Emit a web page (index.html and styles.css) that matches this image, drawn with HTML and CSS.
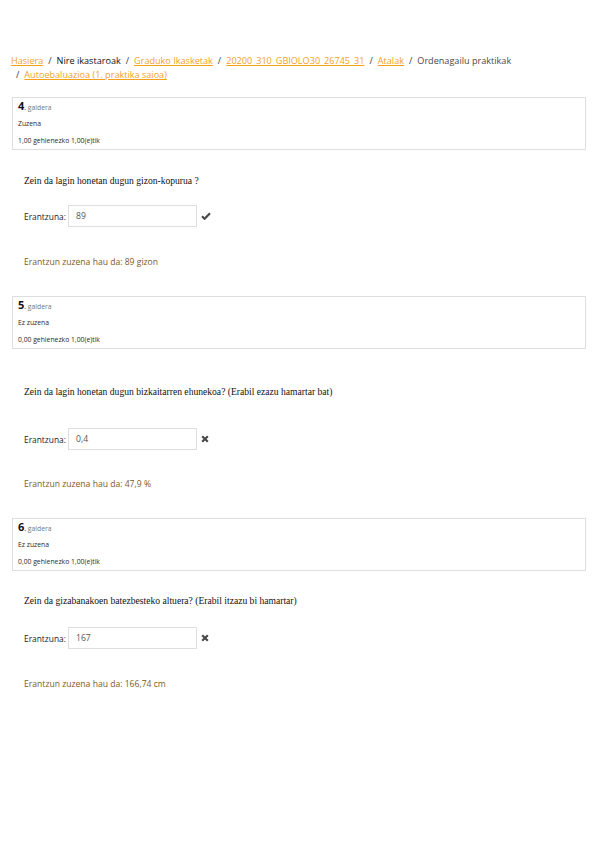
FILE: index.html
```html
<!DOCTYPE html>
<html>
<head>
<meta charset="utf-8">
<link rel="stylesheet" href="styles.css">
</head>
<body>
<nav class="crumbs">
  <ol class="crumb-list">
    <li class="crumb"><a href="#">Hasiera</a></li>
    <li class="crumb"><span class="current">Nire ikastaroak</span></li>
    <li class="crumb"><a href="#">Graduko Ikasketak</a></li>
    <li class="crumb"><a href="#">20200_310_GBIOLO30_26745_31</a></li>
    <li class="crumb"><a href="#">Atalak</a></li>
    <li class="crumb"><span class="plain">Ordenagailu praktikak</span></li>
    <li class="crumb"><a href="#">Autoebaluazioa (1. praktika saioa)</a></li>
  </ol>
</nav>

<section class="que q4">
  <div class="info">
    <div class="no"><span class="qno">4</span><span class="dot">.</span> galdera</div>
    <div class="state">Zuzena</div>
    <div class="grade">1,00 gehienezko 1,00(e)tik</div>
  </div>
  <p class="qtext">Zein da lagin honetan dugun gizon-kopurua ?</p>
  <div class="answer">
    <label class="alabel">Erantzuna:</label>
    <div class="ainput">89</div>
    <svg class="mark" width="10" height="8" viewBox="0 0 10 8"><path d="M1 4.2 L3.6 6.8 L9 1.2" fill="none" stroke="#4a4a4a" stroke-width="2.2"/></svg>
  </div>
  <p class="feedback">Erantzun zuzena hau da: 89 gizon</p>
</section>

<section class="que q5">
  <div class="info">
    <div class="no"><span class="qno">5</span><span class="dot">.</span> galdera</div>
    <div class="state">Ez zuzena</div>
    <div class="grade">0,00 gehienezko 1,00(e)tik</div>
  </div>
  <p class="qtext">Zein da lagin honetan dugun bizkaitarren ehunekoa? (Erabil ezazu hamartar bat)</p>
  <div class="answer">
    <label class="alabel">Erantzuna:</label>
    <div class="ainput">0,4</div>
    <svg class="mark" width="8" height="8" viewBox="0 0 8 8"><path d="M1.2 1.2 L6.8 6.8 M6.8 1.2 L1.2 6.8" fill="none" stroke="#4a4a4a" stroke-width="2.2"/></svg>
  </div>
  <p class="feedback">Erantzun zuzena hau da: 47,9 %</p>
</section>

<section class="que q6">
  <div class="info">
    <div class="no"><span class="qno">6</span><span class="dot">.</span> galdera</div>
    <div class="state">Ez zuzena</div>
    <div class="grade">0,00 gehienezko 1,00(e)tik</div>
  </div>
  <p class="qtext">Zein da gizabanakoen batezbesteko altuera? (Erabil itzazu bi hamartar)</p>
  <div class="answer">
    <label class="alabel">Erantzuna:</label>
    <div class="ainput">167</div>
    <svg class="mark" width="8" height="8" viewBox="0 0 8 8"><path d="M1.2 1.2 L6.8 6.8 M6.8 1.2 L1.2 6.8" fill="none" stroke="#4a4a4a" stroke-width="2.2"/></svg>
  </div>
  <p class="feedback">Erantzun zuzena hau da: 166,74 cm</p>
</section>
</body>
</html>
```

FILE: styles.css
```css
html, body {
  margin: 0;
  padding: 0;
  background: #ffffff;
}

body {
  padding: 54px 13px 0 11px;
  font-family: "Open Sans", "Liberation Sans", sans-serif;
  color: #1d2125;
}

.crumbs {
  font-size: 9.1px;
  line-height: 14px;
}

.crumb-list {
  list-style: none;
  margin: 0;
  padding: 0;
  display: flex;
  flex-wrap: wrap;
}

.crumb + .crumb {
  padding-left: 5px;
}

.crumb + .crumb::before {
  content: "/";
  padding-right: 5px;
  color: #373a3c;
}

.crumb a {
  color: #f4a11a;
  text-decoration: underline;
}

.current {
  color: #111;
}

.plain {
  color: #4a4a4a;
}

.que {
  margin: 15px 0 0 1px;
}

.info {
  border: 1px solid #dedede;
  padding: 2px 5px 0;
  color: #2a2a2a;
  font-size: 6.8px;
}

.no {
  height: 16px;
  line-height: 16px;
  color: #777;
}

.qno {
  font-size: 11px;
  font-weight: 700;
  color: #111;
  line-height: 10px;
}

.dot {
  color: #111;
}

.state {
  height: 16px;
  line-height: 16px;
}

.grade {
  height: 16px;
  line-height: 16px;
  margin-top: 1px;
}

.qtext {
  margin: 24px 0 0 12px;
  font-family: "Liberation Serif", "Times New Roman", serif;
  font-size: 9.6px;
  line-height: 14px;
  color: #111;
}

.answer {
  display: flex;
  align-items: center;
  margin: 17px 0 0 12px;
  height: 22px;
}

.alabel {
  font-size: 8.4px;
  color: #222;
  width: 44px;
}

.ainput {
  box-sizing: border-box;
  width: 129px;
  height: 22px;
  border: 1px solid #dedede;
  padding: 0 7px;
  font-size: 8.6px;
  line-height: 20px;
  color: #555;
}

.mark {
  margin-left: 4px;
}

.feedback {
  margin: 28px 0 0 12px;
  font-size: 8.6px;
  line-height: 14px;
  color: #7d5a25;
}

.q5 { margin-top: 27px; }
.q5 .qtext { margin-top: 36px; }
.q5 .answer { margin-top: 29px; }
.q5 .feedback { margin-top: 27px; }

.q6 { margin-top: 27px; }
.q6 .qtext { margin-top: 23px; }
.q6 .answer { margin-top: 19px; }
.q6 .feedback { margin-top: 28px; }
```
